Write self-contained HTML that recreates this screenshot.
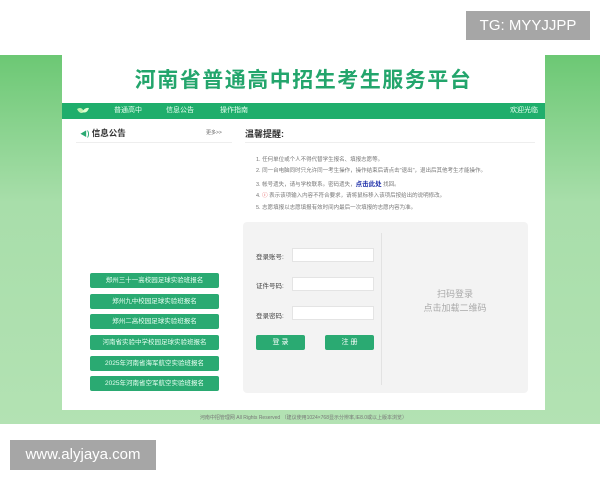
<!DOCTYPE html>
<html><head><meta charset="utf-8"><style>
*{margin:0;padding:0;box-sizing:border-box}
body{width:600px;height:480px;background:#fff;position:relative;overflow:hidden;font-family:"Liberation Sans","Noto Sans CJK SC",sans-serif}
.abs{position:absolute}
.bg{left:0;top:55px;width:600px;height:369px;background:linear-gradient(#6cc874,#a8deaa 40%,#b3e2b3)}
.main{left:62px;top:55px;width:483px;height:355px;background:#fff}
.title{left:62px;top:64px;width:483px;text-align:center;font-size:21px;font-weight:bold;color:#23a56c;letter-spacing:1.5px}
.nav{left:62px;top:103px;width:483px;height:16px;background:#1fae6c;color:#e8fff0;font-size:7px;line-height:16px}
.nav span{position:absolute}
.btnl{left:90px;width:129px;height:15px;background:#2aaa72;color:#e8fff2;font-size:6.5px;text-align:center;line-height:15px;border-radius:2px}
.tip{left:256px;font-size:5.5px;color:#777}
.lbl{left:256px;font-size:6.5px;color:#444}
.inp{left:292px;width:82px;height:14px;background:#fff;border:1px solid #e4e4e4}
.gb{height:15px;width:49px;background:#2aaa72;color:#fff;font-size:7px;text-align:center;line-height:15px;border-radius:2px;top:335px}
</style></head><body>
<div class="abs" style="left:466px;top:11px;width:124px;height:29px;background:#a6a6a6;color:#fff;font-size:15px;line-height:29px;text-align:center">TG: MYYJJPP</div>
<div class="abs bg"></div>
<div class="abs main"></div>
<div class="abs title">河南省普通高中招生考生服务平台</div>
<div class="abs nav">
<svg class="abs" style="left:14px;top:3px" width="14" height="10"><path d="M1 3 Q6 0 8 6 Q4 9 1 3Z" fill="#bff0b0"/><path d="M6 6 Q9 1 13 2 Q11 8 6 6Z" fill="#e0ffd0"/></svg>
<span style="left:52px">普通高中</span><span style="left:104px">信息公告</span><span style="left:158px">操作指南</span><span style="left:448px">欢迎光临</span></div>
<div class="abs" style="left:80px;top:127px;font-size:8.5px;font-weight:bold;color:#333"><span style="color:#2aaa72;font-size:7px">◀)</span> 信息公告</div>
<div class="abs" style="left:206px;top:129px;font-size:5px;color:#666">更多&gt;&gt;</div>
<div class="abs" style="left:76px;top:142px;width:156px;height:1px;background:#eee"></div>
<div class="abs" style="left:245px;top:127px;font-size:9px;font-weight:bold;color:#333">温馨提醒:</div>
<div class="abs" style="left:245px;top:142px;width:290px;height:1px;background:#eee"></div>
<div class="abs tip" style="top:155px">1. 任何单位或个人不得代替学生报名、填报志愿等。</div>
<div class="abs tip" style="top:166px">2. 同一台电脑同时只允许同一考生操作，操作结束后请点击"退出"，退出后其他考生才能操作。</div>
<div class="abs tip" style="top:178px">3. 帐号遗失，请与学校联系。密码遗失，<b style="color:#2233aa;font-size:6.5px">点击此处</b> 找回。</div>
<div class="abs tip" style="top:191px">4. <span style="color:#d33">ⓘ</span> 表示该项输入内容不符合要求，请将鼠标移入该项后按给出的说明修改。</div>
<div class="abs tip" style="top:203px">5. 志愿填报以志愿填报有效时间内最后一次填报的志愿内容为准。</div>
<div class="abs" style="left:243px;top:222px;width:285px;height:171px;background:#f3f3f3;border-radius:4px"></div>
<div class="abs" style="left:381px;top:233px;width:1px;height:152px;background:#e2e2e2"></div>
<div class="abs lbl" style="top:251px">登录账号:</div><div class="abs inp" style="top:248px"></div>
<div class="abs lbl" style="top:280px">证件号码:</div><div class="abs inp" style="top:277px"></div>
<div class="abs lbl" style="top:310px">登录密码:</div><div class="abs inp" style="top:306px"></div>
<div class="abs gb" style="left:256px">登 录</div><div class="abs gb" style="left:325px">注 册</div>
<div class="abs" style="left:385px;top:287px;width:140px;text-align:center;font-size:9px;color:#aaa;line-height:14px">扫码登录<br>点击加载二维码</div>
<div class="abs btnl" style="top:273px">郑州三十一高校园足球实验班报名</div>
<div class="abs btnl" style="top:294px">郑州九中校园足球实验班报名</div>
<div class="abs btnl" style="top:314px">郑州二高校园足球实验班报名</div>
<div class="abs btnl" style="top:335px">河南省实验中学校园足球实验班报名</div>
<div class="abs btnl" style="top:356px">2025年河南省海军航空实验班报名</div>
<div class="abs btnl" style="top:376px">2025年河南省空军航空实验班报名</div>
<div class="abs" style="left:62px;top:414px;width:483px;text-align:center;font-size:5px;color:#777">河南中招管理网 All Rights Reserved （建议使用1024×768显示分辨率,IE8.0或以上版本浏览）</div>
<div class="abs" style="left:10px;top:440px;width:146px;height:30px;background:#a6a6a6;color:#fff;font-size:15px;line-height:30px;text-align:center">www.alyjaya.com</div>
</body></html>
